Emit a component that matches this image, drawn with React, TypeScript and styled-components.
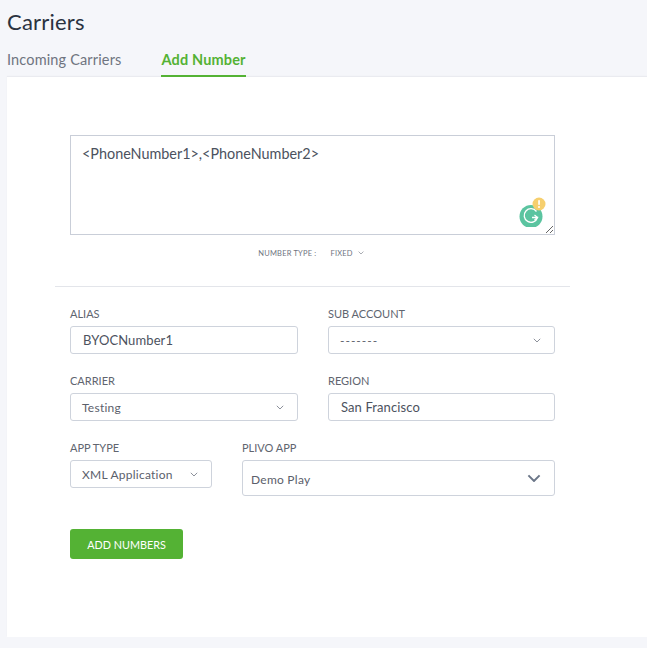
import styled, { createGlobalStyle } from 'styled-components';

const GlobalStyle = createGlobalStyle`
    html, body {
        margin: 0;
        padding: 0;
        background: #f5f6fa;
        font-family: "Lato", "Open Sans", sans-serif;
    }
`;

const Page = styled.div`
    width: 647px;
    height: 648px;
    overflow: hidden;
    box-sizing: border-box;
    padding-left: 7px;
`;
const Title = styled.h1`
    margin: 0;
    padding: 9px 0 0;
    height: 38px;
    box-sizing: border-box;
    font-size: 22px;
    line-height: 26px;
    font-weight: 400;
    letter-spacing: 0.2px;
    color: #2a3240;
`;
const Tabs = styled.div`
    display: flex;
    gap: 40px;
    height: 39px;
    box-sizing: border-box;
`;
const Tab = styled.div<{ $active?: boolean }>`
    height: 39px;
    box-sizing: border-box;
    padding-top: 13px;
    font-size: 14.5px;
    line-height: 18px;
    letter-spacing: 0.15px;
    font-weight: ${p => (p.$active ? 700 : 400)};
    color: ${p => (p.$active ? '#54b234' : '#6f7480')};
    border-bottom: 2px solid ${p => (p.$active ? '#54b234' : 'transparent')};
`;
const Card = styled.main`
    height: 560px;
    background: #fff;
    padding: 58px 0 0 48px;
    box-sizing: border-box;
    box-shadow: 0 -1px 1px rgba(60, 70, 90, 0.06);
`;
const Form = styled.div`
    width: 515px;
`;
const TopBlock = styled.div`
    position: relative;
    padding: 0 15px;
    height: 151px;
    border-bottom: 1px solid #e3e5ea;
`;
const NumbersArea = styled.textarea`
    display: block;
    width: 485px;
    height: 100px;
    box-sizing: border-box;
    border: 1px solid #c9ced8;
    padding: 9px 11px;
    margin: 0;
    outline: none;
    font-family: inherit;
    font-size: 14.4px;
    line-height: 18px;
    color: #4c525e;
`;
const GrammarlyBadge = styled.svg`
    position: absolute;
    left: 463px;
    top: 62px;
`;
const NumberType = styled.div`
    display: flex;
    align-items: center;
    justify-content: center;
    gap: 14px;
    height: 18px;
    margin-top: 9px;
    padding-right: 3px;
    font-size: 7.5px;
    letter-spacing: 0.2px;
    color: #6f7480;
`;
const TypeValue = styled.span`
    display: flex;
    align-items: center;
    gap: 5px;
`;
const Fields = styled.div`
    padding: 19px 15px 0;
`;
const FieldGrid = styled.div`
    display: grid;
    grid-template-columns: 228px 227px;
    column-gap: 30px;
    row-gap: 19px;
`;
const AppRow = styled.div`
    display: flex;
    gap: 30px;
    margin-top: 19px;
    align-items: flex-start;
`;
const Field = styled.div<{ $width?: number }>`
    width: ${p => (p.$width ? `${p.$width}px` : 'auto')};
`;
const Label = styled.label`
    display: block;
    height: 20px;
    font-size: 11px;
    line-height: 15px;
    color: #60656f;
`;
const TextInput = styled.input`
    display: block;
    width: 100%;
    height: 28px;
    box-sizing: border-box;
    margin: 0;
    padding: 0 12px;
    border: 1px solid #ced3dc;
    border-radius: 3px;
    outline: none;
    font-family: inherit;
    font-size: 13px;
    color: #4c525e;
    letter-spacing: 0.1px;
`;
const SelectBox = styled.div<{ $tall?: boolean }>`
    display: flex;
    align-items: center;
    justify-content: space-between;
    height: ${p => (p.$tall ? 36 : 28)}px;
    box-sizing: border-box;
    padding: 0 ${p => (p.$tall ? 13 : 13)}px 0 ${p => (p.$tall ? 8 : 11)}px;
    border: 1px solid #ced3dc;
    border-radius: 3px;
    background: #fff;
    font-size: 12px;
    letter-spacing: 0.25px;
    color: #5b606b;
`;
const SelectText = styled.span<{ $tall?: boolean; $dashes?: boolean }>`
    position: relative;
    top: ${p => (p.$tall ? 1 : 0)}px;
    letter-spacing: ${p => (p.$dashes ? '1px' : 'inherit')};
`;
const AddButton = styled.button`
    display: block;
    width: 113px;
    height: 30px;
    margin: 33px 0 0;
    padding: 0;
    border: none;
    border-radius: 3px;
    background: #54b234;
    color: #fff;
    font-family: inherit;
    font-size: 10.8px;
`;

const Chevron = ({ size = 9, stroke = '#6f7480', width = 1 }: { size?: number; stroke?: string; width?: number }) => (
    <svg width={size} height={size * 0.6} viewBox="0 0 10 6" fill="none">
        <path d="M1 1 L5 5 L9 1" stroke={stroke} strokeWidth={width} />
    </svg>
);

export default function App() {
    return (
        <Page>
            <GlobalStyle />
            <Title>Carriers</Title>
            <Tabs>
                <Tab>Incoming Carriers</Tab>
                <Tab $active>Add Number</Tab>
            </Tabs>
            <Card>
                <Form>
                    <TopBlock>
                        <NumbersArea defaultValue="<PhoneNumber1>,<PhoneNumber2>" spellCheck={false} />
                        <GrammarlyBadge width="30" height="30" viewBox="0 0 30 30">
                            <circle cx="13" cy="19.5" r="11.5" fill="#5bc4a0" />
                            <path d="M18.5 14.5 A6.8 6.8 0 1 0 19.5 20.5 H14" fill="none" stroke="#fff" strokeWidth="1.3" />
                            <path d="M16.5 18 L19.5 20.5 L16.5 23" fill="none" stroke="#fff" strokeWidth="1.2" />
                            <circle cx="21" cy="7" r="6.5" fill="#f6cf6e" />
                            <rect x="20.2" y="3" width="1.7" height="5" rx="0.8" fill="#fff" />
                            <circle cx="21" cy="10" r="1" fill="#fff" />
                        </GrammarlyBadge>
                        <NumberType>
                            <span>NUMBER TYPE :</span>
                            <TypeValue>
                                FIXED
                                <Chevron size={6} />
                            </TypeValue>
                        </NumberType>
                    </TopBlock>
                    <Fields>
                        <FieldGrid>
                            <Field>
                                <Label>ALIAS</Label>
                                <TextInput defaultValue="BYOCNumber1" />
                            </Field>
                            <Field>
                                <Label>SUB ACCOUNT</Label>
                                <SelectBox>
                                    <SelectText $dashes>-------</SelectText>
                                    <Chevron size={8} />
                                </SelectBox>
                            </Field>
                            <Field>
                                <Label>CARRIER</Label>
                                <SelectBox>
                                    <SelectText>Testing</SelectText>
                                    <Chevron size={8} />
                                </SelectBox>
                            </Field>
                            <Field>
                                <Label>REGION</Label>
                                <TextInput defaultValue="San Francisco" />
                            </Field>
                        </FieldGrid>
                        <AppRow>
                            <Field $width={142}>
                                <Label>APP TYPE</Label>
                                <SelectBox>
                                    <SelectText>XML Application</SelectText>
                                    <Chevron size={8} />
                                </SelectBox>
                            </Field>
                            <Field $width={313}>
                                <Label>PLIVO APP</Label>
                                <SelectBox $tall>
                                    <SelectText $tall>Demo Play</SelectText>
                                    <Chevron size={14} stroke="#6b7688" width={1.4} />
                                </SelectBox>
                            </Field>
                        </AppRow>
                        <AddButton>ADD NUMBERS</AddButton>
                    </Fields>
                </Form>
            </Card>
        </Page>
    );
}
